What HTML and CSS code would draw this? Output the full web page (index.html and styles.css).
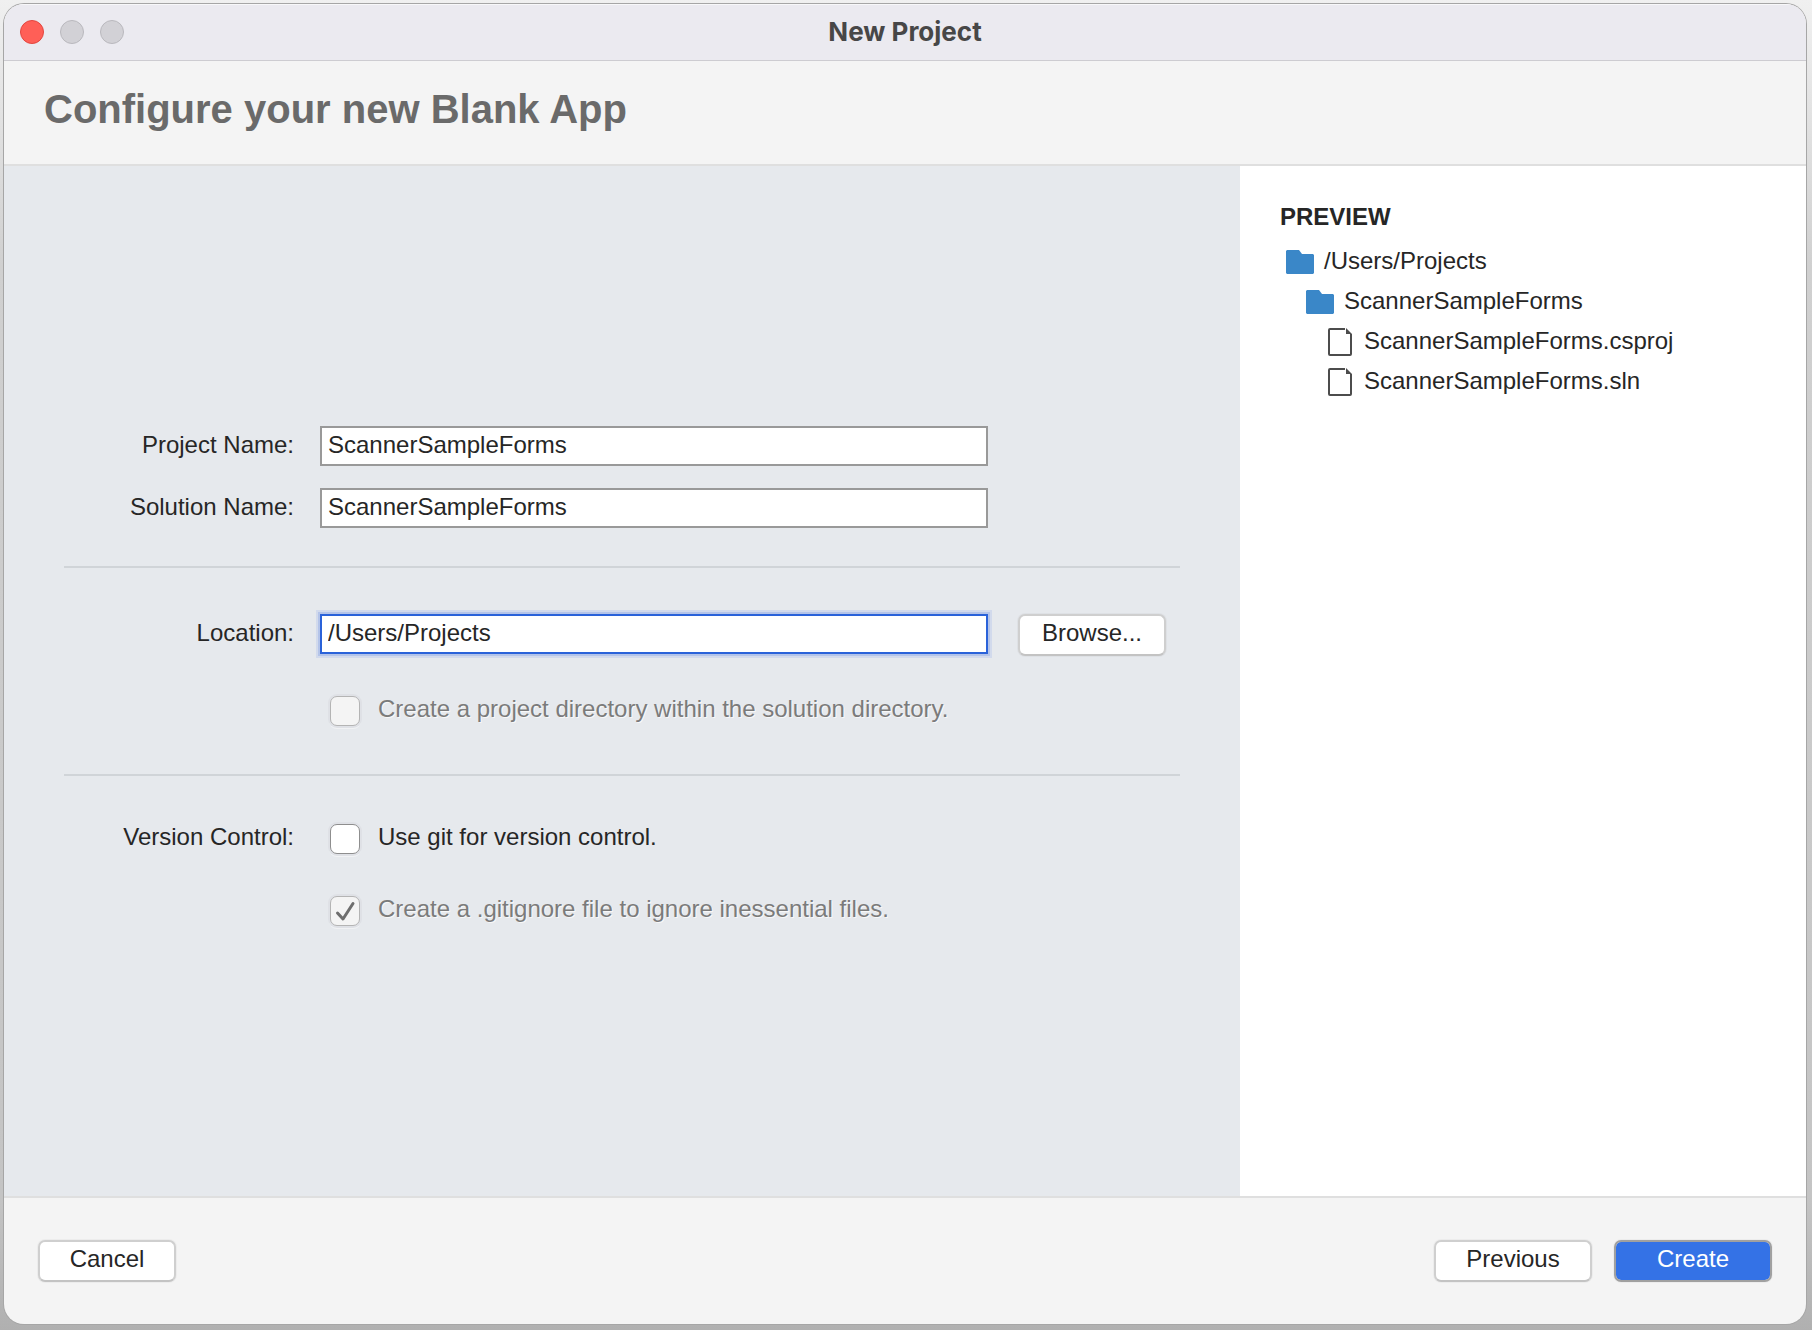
FILE: index.html
```html
<!DOCTYPE html>
<html lang="en">
<head>
  <meta charset="utf-8">
  <meta name="viewport" content="width=device-width, initial-scale=1.0">
  <title>New Project</title>
  <link rel="stylesheet" href="styles.css">
</head>
<body>
  <div class="window">
    <div class="titlebar">
      <div class="lights">
        <button class="light close" type="button" aria-label="Close"></button>
        <button class="light" type="button" aria-label="Minimize" disabled></button>
        <button class="light" type="button" aria-label="Zoom" disabled></button>
      </div>
      <div class="title">New Project</div>
    </div>

    <header class="header">
      <h1>Configure your new Blank App</h1>
    </header>

    <main class="content">
      <form class="form" id="project-form">
        <div class="group">
          <div class="row">
            <label class="label" for="project-name">Project Name:</label>
            <input class="field" id="project-name" type="text" value="ScannerSampleForms">
          </div>
          <div class="row">
            <label class="label" for="solution-name">Solution Name:</label>
            <input class="field" id="solution-name" type="text" value="ScannerSampleForms">
          </div>
        </div>

        <div class="group location">
          <div class="row">
            <label class="label" for="location">Location:</label>
            <input class="field active" id="location" type="text" value="/Users/Projects">
            <button class="button" type="button">Browse...</button>
          </div>
          <div class="row">
            <label class="check disabled">
              <input type="checkbox" disabled>
              <span>Create a project directory within the solution directory.</span>
            </label>
          </div>
        </div>

        <div class="group version">
          <div class="row">
            <span class="label">Version Control:</span>
            <label class="check">
              <input type="checkbox">
              <span>Use git for version control.</span>
            </label>
          </div>
          <div class="row">
            <label class="check disabled">
              <input type="checkbox" checked disabled>
              <svg class="tick" viewBox="0 0 30 30"><path d="M7.5 17l5.5 6L23 7.5"/></svg>
              <span>Create a .gitignore file to ignore inessential files.</span>
            </label>
          </div>
        </div>
      </form>

      <aside class="preview">
        <h2>PREVIEW</h2>
        <ul class="tree">
          <li>
            <div class="node">
              <svg class="folder" viewBox="0 0 28 24"><path d="M1 0h12l3 4h11l1 1v18l-1 1H1l-1-1V1z"/></svg>
              <span>/Users/Projects</span>
            </div>
            <ul>
              <li>
                <div class="node">
                  <svg class="folder" viewBox="0 0 28 24"><path d="M1 0h12l3 4h11l1 1v18l-1 1H1l-1-1V1z"/></svg>
                  <span>ScannerSampleForms</span>
                </div>
                <ul>
                  <li>
                    <div class="node">
                      <svg class="file" viewBox="0 0 28 28"><path class="edge" d="M19 1H4Q3 1 3 2v24q0 1 1 1h20q1 0 1-1V6"/><path class="fold" d="M20 0l6 6h-6z"/></svg>
                      <span>ScannerSampleForms.csproj</span>
                    </div>
                  </li>
                  <li>
                    <div class="node">
                      <svg class="file" viewBox="0 0 28 28"><path class="edge" d="M19 1H4Q3 1 3 2v24q0 1 1 1h20q1 0 1-1V6"/><path class="fold" d="M20 0l6 6h-6z"/></svg>
                      <span>ScannerSampleForms.sln</span>
                    </div>
                  </li>
                </ul>
              </li>
            </ul>
          </li>
        </ul>
      </aside>
    </main>

    <footer class="footer">
      <button class="button cancel" type="button">Cancel</button>
      <button class="button wide" type="button">Previous</button>
      <button class="button wide primary" type="submit" form="project-form">Create</button>
    </footer>
  </div>
</body>
</html>
```
FILE: styles.css
```css
* {
  box-sizing: border-box;
}

body {
  margin: 0;
  min-height: 100vh;
  padding: 4px 6px 6px 4px;
  display: flex;
  background: linear-gradient(#f0f0f0 0%, #d0d0d0 20%, #c4c4c4 90%, #b0b0b0 100%);
  font-family: "Liberation Sans", Helvetica, Arial, sans-serif;
  font-size: 24px;
  line-height: 28px;
  color: #262626;
}

h1, h2, ul {
  margin: 0;
  padding: 0;
}

button, input {
  font: inherit;
  color: inherit;
}

.window {
  flex: 1;
  display: flex;
  flex-direction: column;
  overflow: hidden;
  border-radius: 20px;
  background: #f4f4f4;
  box-shadow: 0 0 0 1px #a6a6a6;
}

/* title bar */
.titlebar {
  display: grid;
  grid-template-columns: 1fr auto 1fr;
  align-items: center;
  height: 57px;
  padding: 0 16px 2px;
  background: #ebeaf0;
  border-top: 1px solid #f8f8fa;
  border-bottom: 1px solid #cdccd1;
}

.lights {
  display: flex;
  gap: 16px;
}

.light {
  width: 24px;
  height: 24px;
  padding: 0;
  border: 1px solid #b9b8bd;
  border-radius: 50%;
  background: #d2d1d6;
}

.light.close {
  border-color: #e2463f;
  background: #ff5f57;
}

.title {
  font-family: Inter, sans-serif;
  font-size: 26px;
  font-weight: 700;
  color: #474747;
}

.header {
  padding: 25px 40px 31px;
  border-bottom: 2px solid #dfdfdf;
}

.header h1 {
  font-size: 40px;
  line-height: 47px;
  color: #6a6a6a;
}

.content {
  flex: 1;
  display: flex;
}

/* settings form */
.form {
  flex: 1;
  display: flex;
  flex-direction: column;
  justify-content: center;
  padding: 0 60px 10px;
  background: #e6e9ed;
}

.group {
  display: grid;
  gap: 22px;
  padding-bottom: 38px;
}

.group.location {
  gap: 40px;
  padding: 46px 0 48px;
  border-top: 2px solid #d0d4d8;
  border-bottom: 2px solid #d0d4d8;
}

.group.version {
  gap: 42px;
  padding: 48px 0 0;
}

.row {
  display: grid;
  grid-template-columns: 230px minmax(0, 1fr) 148px;
  padding-right: 14px;
}

.label {
  padding: 5px 0;
  text-align: right;
}

.version .label {
  padding: 0;
  line-height: 26px;
}

.field {
  height: 40px;
  margin: 0 30px 0 26px;
  padding: 0 6px 2px;
  border: 2px solid #999;
  border-radius: 0;
  background: #fff;
  outline: none;
}

.field.active {
  border-color: #2a62d9;
  box-shadow: 0 0 0 2px #b4c4e9, 0 0 0 4px #d2daec;
}

.check {
  position: relative;
  grid-column: 2 / 4;
  display: flex;
  gap: 18px;
  margin-left: 36px;
  line-height: 26px;
}

.check input {
  appearance: none;
  width: 30px;
  height: 30px;
  margin: 0;
  border: 1px solid #8e8e8e;
  border-radius: 7px;
  background: #fff;
  box-shadow: 0 0 0 2px #dfe1e6, 0 2px 0 1px #f1f2f4;
}

.check.disabled {
  color: #7b7b7b;
  text-shadow: 1px 1px 0 #f8f8f8;
}

.check.disabled input {
  border-color: #b4b4b4;
  background: #f4f4f4;
}

.tick {
  position: absolute;
  left: 0;
  top: 0;
  width: 30px;
  height: 30px;
  fill: none;
  stroke: #6e6e6e;
  stroke-width: 3;
  stroke-linecap: round;
  stroke-linejoin: round;
}

/* preview */
.preview {
  flex: 0 0 566px;
  padding: 37px 40px;
  background: #fff;
}

.preview h2 {
  margin-bottom: 11px;
  font-size: 24px;
}

.tree {
  padding-left: 6px;
}

.tree ul {
  padding-left: 20px;
}

.tree li {
  list-style: none;
}

.node {
  display: flex;
  align-items: center;
  gap: 10px;
  height: 40px;
}

.node span {
  padding-bottom: 2px;
}

.folder {
  width: 28px;
  height: 24px;
  fill: #3a87c8;
}

.file {
  width: 28px;
  height: 28px;
}

.file .edge {
  fill: none;
  stroke: #4c4c4c;
  stroke-width: 2;
}

.file .fold {
  fill: #4c4c4c;
}

/* buttons */
.button {
  height: 42px;
  padding: 0 0 4px;
  border: 2px solid #cfcfcf;
  border-bottom-color: #c3c3c3;
  border-radius: 7px;
  background: #fff;
  box-shadow: 0 0 0 1px rgba(0, 0, 0, 0.03);
}

.button.primary {
  border-color: #a0a0a0;
  background: #3472e6;
  background-clip: padding-box;
  color: #fff;
}

.footer {
  display: flex;
  gap: 22px;
  padding: 42px 34px;
  border-top: 2px solid #dfdfdf;
}

.cancel {
  width: 138px;
  margin-right: auto;
}

.wide {
  width: 158px;
}
```
